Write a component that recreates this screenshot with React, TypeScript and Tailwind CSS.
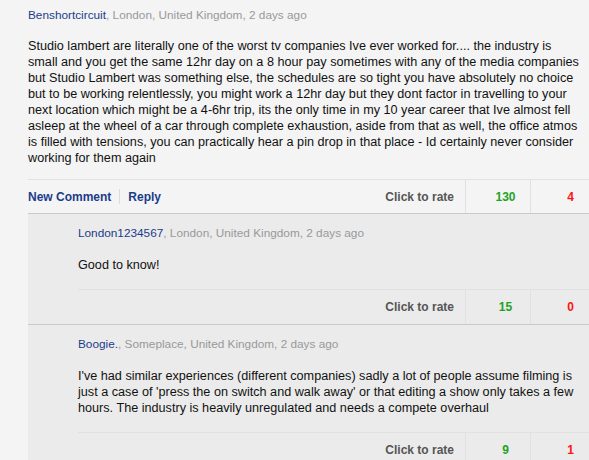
import React from 'react';

type Comment = {
  name: string;
  place: string;
  lines: string[];
  up: number;
  down: number;
};

// lines are kept as in the original so wrapping matches
const main: Comment = {
  name: 'Benshortcircuit',
  place: 'London, United Kingdom, 2 days ago',
  lines: [
    'Studio lambert are literally one of the worst tv companies Ive ever worked for.... the industry is',
    'small and you get the same 12hr day on a 8 hour pay sometimes with any of the media companies',
    'but Studio Lambert was something else, the schedules are so tight you have absolutely no choice',
    'but to be working relentlessly, you might work a 12hr day but they dont factor in travelling to your',
    'next location which might be a 4-6hr trip, its the only time in my 10 year career that Ive almost fell',
    'asleep at the wheel of a car through complete exhaustion, aside from that as well, the office atmos',
    'is filled with tensions, you can practically hear a pin drop in that place - Id certainly never consider',
    'working for them again',
  ],
  up: 130,
  down: 4,
};

const replies: Comment[] = [
  {
    name: 'London1234567',
    place: 'London, United Kingdom, 2 days ago',
    lines: ['Good to know!'],
    up: 15,
    down: 0,
  },
  {
    name: 'Boogie.',
    place: 'Someplace, United Kingdom, 2 days ago',
    lines: [
      "I've had similar experiences (different companies) sadly a lot of people assume filming is",
      "just a case of 'press the on switch and walk away' or that editing a show only takes a few",
      'hours. The industry is heavily unregulated and needs a compete overhaul',
    ],
    up: 9,
    down: 1,
  },
];

const Meta = ({ name, place }: { name: string; place: string }) => (
  <div className="text-[11.8px] leading-[16px] text-[#999]">
    <span className="text-[#1b3c8a]">{name}</span>, {place}
  </div>
);

const Body = ({ lines, className }: { lines: string[]; className: string }) => (
  <p className={`text-[12.65px] leading-[16px] ${className}`}>
    {lines.map((l) => (
      <span key={l} className="block whitespace-nowrap">
        {l}
      </span>
    ))}
  </p>
);

const RatingBar = ({
  up,
  down,
  left,
  tall,
}: {
  up: number;
  down: number;
  left?: React.ReactNode;
  tall?: boolean;
}) => (
  <div
    className={`flex items-center border-t border-[#e1e1e1] text-[12px] font-bold ${tall ? 'h-[35px]' : 'h-[34px]'}`}
  >
    {left}
    <div className="ml-auto pr-[11px] text-[#555]">Click to rate</div>
    <div className="flex h-full w-[65px] items-center justify-center border-l border-[#e1e1e1] pl-[15px] text-[#1fa31f]">
      {up}
    </div>
    <div className="flex h-full w-[65px] items-center justify-center border-l border-[#e1e1e1] pl-[15px] text-[#ff1414]">
      {down}
    </div>
  </div>
);

const App = () => {
  return (
    <div className="min-h-screen overflow-hidden bg-[#f4f4f4] font-['Liberation_Sans',Arial,sans-serif] text-[#111]">
      <div className="ml-[28px] w-[567px]">
        {/* main comment */}
        <div className="border-b border-[#c9c9c9]">
          <div className="pt-[7px]">
            <Meta name={main.name} place={main.place} />
          </div>
          <Body lines={main.lines} className="mt-[15px] mb-[13px]" />
          <RatingBar
            up={main.up}
            down={main.down}
            left={
              <div className="flex items-center text-[#1b3c8a]">
                <span>New Comment</span>
                <span className="mx-[8px] h-[15px] w-px bg-[#dcdcdc]"></span>
                <span>Reply</span>
              </div>
            }
          />
        </div>

        {/* replies */}
        {replies.map((r) => (
          <div key={r.name} className="border-b border-[#c9c9c9] bg-[#ebebeb] pl-[50px]">
            <div className="pt-[11px]">
              <Meta name={r.name} place={r.place} />
            </div>
            <Body lines={r.lines} className="mt-[16px] mb-[16px]" />
            <RatingBar up={r.up} down={r.down} tall />
          </div>
        ))}
      </div>
    </div>
  );
};

export default App;
